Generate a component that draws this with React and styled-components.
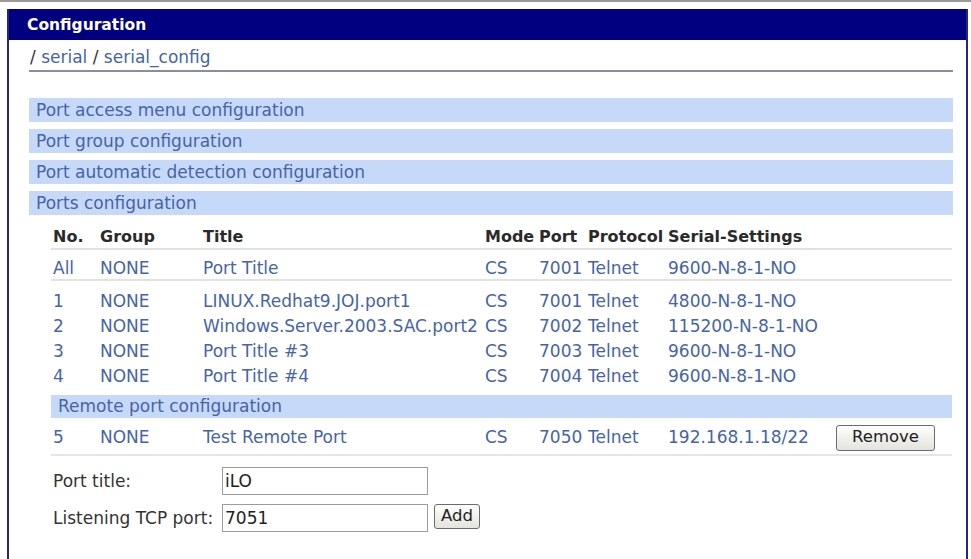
import React from "react";
import styled, { createGlobalStyle } from "styled-components";

const menus = [
  "Port access menu configuration",
  "Port group configuration",
  "Port automatic detection configuration",
  "Ports configuration",
];

const ports = [
  { no: "1", group: "NONE", title: "LINUX.Redhat9.JOJ.port1", mode: "CS", port: "7001", proto: "Telnet", serial: "4800-N-8-1-NO" },
  { no: "2", group: "NONE", title: "Windows.Server.2003.SAC.port2", mode: "CS", port: "7002", proto: "Telnet", serial: "115200-N-8-1-NO" },
  { no: "3", group: "NONE", title: "Port Title #3", mode: "CS", port: "7003", proto: "Telnet", serial: "9600-N-8-1-NO" },
  { no: "4", group: "NONE", title: "Port Title #4", mode: "CS", port: "7004", proto: "Telnet", serial: "9600-N-8-1-NO" },
];

const GlobalStyle = createGlobalStyle`
  html, body {
    margin: 0;
    padding: 0;
    background: #fff;
    overflow: hidden;
  }
  body {
    font-family: "DejaVu Sans", Verdana, sans-serif;
    font-size: 17px;
    color: #333;
  }
`;

const PortRow = ({ p }) => (
  <Row>
    <Cell>{p.no}</Cell>
    <Cell>{p.group}</Cell>
    <Cell>{p.title}</Cell>
    <Cell>{p.mode}</Cell>
    <Cell>{p.port}</Cell>
    <Cell>{p.proto}</Cell>
    <Cell>{p.serial}</Cell>
    <Cell />
  </Row>
);

const App = () => {
  return (
    <Page>
      <GlobalStyle />
      <Panel>
        <Header>Configuration</Header>
        <Content>
          <Crumbs>
            <Slash>/</Slash> <Link>serial</Link> <Slash>/</Slash> <Link>serial_config</Link>
          </Crumbs>

          <MenuList>
            {menus.map((m) => (
              <MenuBar key={m}>{m}</MenuBar>
            ))}
          </MenuList>

          <Table>
            <HeadRow>
              <Cell $head>No.</Cell>
              <Cell $head>Group</Cell>
              <Cell $head>Title</Cell>
              <Cell $head>Mode</Cell>
              <Cell $head>Port</Cell>
              <Cell $head>Protocol</Cell>
              <Cell $head>Serial-Settings</Cell>
              <Cell $head />
            </HeadRow>
            <AllRow>
              <Cell>All</Cell>
              <Cell>NONE</Cell>
              <Cell>Port Title</Cell>
              <Cell>CS</Cell>
              <Cell>7001</Cell>
              <Cell>Telnet</Cell>
              <Cell>9600-N-8-1-NO</Cell>
              <Cell />
            </AllRow>
            <PortGroup>
              {ports.map((p) => (
                <PortRow key={p.no} p={p} />
              ))}
            </PortGroup>
            <SubBar>Remote port configuration</SubBar>
            <RemoteRow>
              <Cell>5</Cell>
              <Cell>NONE</Cell>
              <Cell>Test Remote Port</Cell>
              <Cell>CS</Cell>
              <Cell>7050</Cell>
              <Cell>Telnet</Cell>
              <Cell>192.168.1.18/22</Cell>
              <Cell>
                <Button $w={99} $h={26}>Remove</Button>
              </Cell>
            </RemoteRow>

            <Form>
              <FormRow>
                <Label>Port title:</Label>
                <Input defaultValue="iLO" />
              </FormRow>
              <FormRow>
                <Label>Listening TCP port:</Label>
                <Input defaultValue="7051" />
                <AddButton $w={46} $h={25}>Add</AddButton>
              </FormRow>
            </Form>
          </Table>
        </Content>
      </Panel>
    </Page>
  );
};

const Page = styled.div`
  border-top: 2px solid #9a9a9a;
  padding: 7px 3px 0 7px;
`;

const Panel = styled.div`
  border-left: 2px solid #26267e;
  border-right: 2px solid #26267e;
  padding-bottom: 40px;
`;

const Header = styled.div`
  height: 31px;
  box-sizing: border-box;
  padding: 5px 0 0 18px;
  background: #000080;
  color: #fff;
  font-weight: bold;
  font-size: 15.5px;
  line-height: 22px;
`;

const Content = styled.div`
  padding: 0 13px 0 20px;
`;

const Crumbs = styled.div`
  margin-top: 7px;
  padding: 0 0 3px 1px;
  line-height: 20px;
  border-bottom: 2px solid #8c8ca0;
`;

const Slash = styled.span`
  color: #333;
`;

const Link = styled.span`
  color: #4664a8;
`;

const MenuList = styled.div`
  margin-top: 26px;
  display: flex;
  flex-direction: column;
  gap: 7px;
`;

const MenuBar = styled.div`
  height: 24px;
  line-height: 24px;
  padding-left: 7px;
  background: #c6d9f8;
  color: #4664a8;
`;

const Table = styled.div`
  margin: 0 1px 0 22px;
`;

const Row = styled.div`
  display: grid;
  grid-template-columns: 47px 103px 282px 54px 49px 80px 168px 1fr;
  line-height: 25px;
  color: #4664a8;
  white-space: nowrap;
`;

const HeadRow = styled(Row)`
  margin-top: 11px;
  line-height: 22px;
  border-bottom: 2px solid #e2e2e2;
  color: #2a2a2a;
`;

const AllRow = styled(Row)`
  padding-top: 7px;
  line-height: 22px;
  border-bottom: 2px solid #e2e2e2;
`;

const PortGroup = styled.div`
  padding-top: 8px;
`;

const RemoteRow = styled(Row)`
  margin-top: 3px;
  height: 33px;
  align-items: center;
  border-bottom: 2px solid #e6e6e6;
`;

const Cell = styled.div`
  padding-left: 2px;
  font-weight: ${(p) => (p.$head ? "bold" : "normal")};
  font-size: ${(p) => (p.$head ? "16px" : "17px")};
`;

const SubBar = styled.div`
  margin-top: 6px;
  height: 23px;
  line-height: 23px;
  padding-left: 7px;
  background: #c6d9f8;
  color: #4664a8;
`;

const Button = styled.button`
  width: ${(p) => p.$w}px;
  height: ${(p) => p.$h}px;
  padding: 0;
  border: 1px solid #6c6c6c;
  border-radius: 3px;
  background: linear-gradient(#fdfdfb, #e4e4de);
  color: #222;
  font-family: inherit;
  font-size: 16.5px;
  line-height: 1;
`;

const AddButton = styled(Button)`
  margin-left: 6px;
`;

const Form = styled.div`
  margin-top: 11px;
  padding-left: 2px;
  display: flex;
  flex-direction: column;
  gap: 9px;
`;

const FormRow = styled.div`
  display: flex;
  align-items: flex-start;
`;

const Label = styled.div`
  width: 169px;
  line-height: 28px;
  color: #333;
`;

const Input = styled.input`
  box-sizing: border-box;
  width: 206px;
  height: 28px;
  padding: 0 2px;
  border: 1px solid #9c9c9c;
  font-family: inherit;
  font-size: 17px;
  color: #222;
  outline: none;
`;

export default App;
